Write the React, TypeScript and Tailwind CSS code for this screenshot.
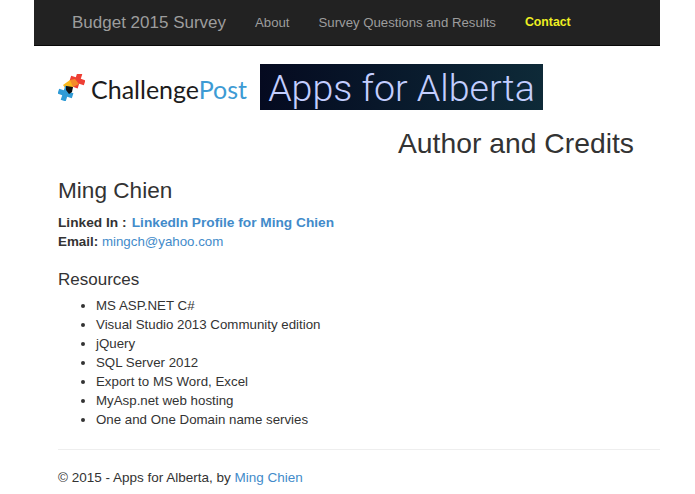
import React from 'react';

const resources = [
  'MS ASP.NET C#',
  'Visual Studio 2013 Community edition',
  'jQuery',
  'SQL Server 2012',
  'Export to MS Word, Excel',
  'MyAsp.net web hosting',
  'One and One Domain name servies',
];

const plus = 'M-2.6-7.5h5.2v4.9h4.9v5.2h-4.9v4.9h-5.2v-4.9h-4.9v-5.2h4.9z';

function ChallengeMark() {
  return (
    <svg width="27" height="27" viewBox="0 0 27 27" className="shrink-0">
      <path d={plus} transform="translate(19.5 6.5) rotate(18)" fill="#ee3f34" />
      <path d="M5 11l7-5 5 3-3 5-5 3z" fill="#fbb81c" />
      <path d={plus} transform="translate(7.5 19.5) rotate(18)" fill="#2f9bd6" />
      <path d="M8 12l7 1-1 5-3 2-3-4z" fill="#111" />
      <path d="M12 6l5-1 4 5-6 3z" fill="#f58a2a" />
    </svg>
  );
}

export default function App() {
  return (
    <div className="h-[494px] overflow-hidden bg-white font-['Liberation_Sans',sans-serif] text-[13.3px] leading-[19px] text-[#333]">
      <div className="ml-[34px] w-[626px]">
        <nav className="flex h-[46px] items-center border-b border-[#080808] bg-[#222] pl-[38px]">
          <span className="text-[17px] text-[#9d9d9d]">Budget 2015 Survey</span>
          <span className="-mt-px ml-[29px] text-[13.2px] text-[#9d9d9d]">About</span>
          <span className="-mt-px ml-[29px] text-[13.2px] text-[#9d9d9d]">Survey Questions and Results</span>
          <span className="-mt-px ml-[29px] text-[12.3px] font-bold text-[#eeee22]">Contact</span>
        </nav>

        <div className="pl-[24px]">
          <div className="mt-[18px] flex h-[46px] items-center">
            <ChallengeMark />
            <span className="mt-[4px] ml-[6px] w-[169px] font-['Lato',sans-serif] text-[25px] leading-none text-[#1c1c1c]">
              Challenge<span className="text-[#3d9bd4]">Post</span>
            </span>
            <div className="flex h-[46px] w-[283px] items-center justify-center bg-gradient-to-r from-[#050a20] to-[#0e2a38] pt-[2px] font-['Roboto',sans-serif] text-[37.6px] font-light text-[#c3ceff]">
              Apps for Alberta
            </div>
          </div>

          <h2 className="mt-[17px] pl-[340px] text-[28.3px] leading-[32px] font-normal">Author and Credits</h2>

          <h3 className="mt-[19px] text-[22.6px] leading-[26px] font-normal">Ming Chien</h3>
          <p className="mt-[9px]">
            <b className="mr-[1.5px] text-[13.7px]">Linked In : </b>
            <a className="text-[13.7px] font-bold text-[#428bca]">LinkedIn Profile for Ming Chien</a>
            <br />
            <b className="text-[13.4px]">Email: </b>
            <a className="text-[#428bca]">mingch@yahoo.com</a>
          </p>

          <h4 className="mt-[19px] text-[17px] leading-[20px] font-normal">Resources</h4>
          <ul className="mt-[6px] list-disc pl-[38px]">
            {resources.map((item) => (
              <li key={item}>{item}</li>
            ))}
          </ul>

          <hr className="mt-[20px] border-[#eee]" />
          <p className="mt-[18px] text-[13.5px]">
            © 2015 - Apps for Alberta, by <a className="text-[#428bca]">Ming Chien</a>
          </p>
        </div>
      </div>
    </div>
  );
}
